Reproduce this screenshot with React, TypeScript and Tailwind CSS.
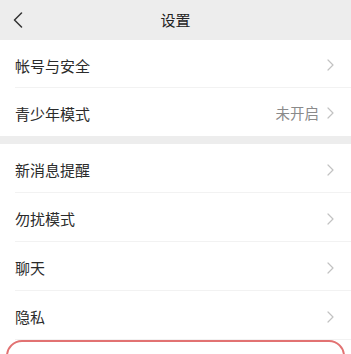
/**
 * Settings screen - 设置
 */

function Chevron() {
  return (
    <svg width="7" height="12" viewBox="0 0 7 12" fill="none" className="shrink-0">
      <path d="M1 1l5 5-5 5" stroke="#c2c2c2" strokeWidth="1.2" strokeLinecap="round" strokeLinejoin="round" />
    </svg>
  );
}

function Row({ label, value, divider = true, tall = false }: { label: string; value?: string; divider?: boolean; tall?: boolean }) {
  return (
    <div
      className={`relative flex items-center justify-between bg-white pl-[15px] pr-[17px] ${tall ? "h-[49px]" : "h-[48px]"}`}
    >
      <span className="pt-[4px] text-[15px] text-[#2b2b2b]">{label}</span>
      <div className="flex items-center gap-[8px] pt-[2px]">
        {value && <span className="text-[14.5px] text-[#8a8a8a]">{value}</span>}
        <Chevron />
      </div>
      {divider && <div className="absolute bottom-0 left-[15px] right-0 h-px bg-[#f2f2f2]" />}
    </div>
  );
}

export default function App() {
  const groupA = [{ label: "帐号与安全" }, { label: "青少年模式", value: "未开启" }];
  const groupB = [{ label: "新消息提醒" }, { label: "勿扰模式" }, { label: "聊天" }, { label: "隐私" }];

  return (
    <div
      className="h-[354px] w-[351px] overflow-hidden bg-white"
      style={{ fontFamily: '"Noto Sans CJK SC", "Noto Sans", sans-serif' }}
    >
      {/* Header */}
      <div className="relative flex h-[40px] items-center justify-center bg-[#ededed]">
        <svg width="10" height="16" viewBox="0 0 10 16" fill="none" className="absolute left-[13px] top-[12px]">
          <path d="M8.5 1L1.5 8l7 7" stroke="#333" strokeWidth="1.5" strokeLinecap="round" strokeLinejoin="round" />
        </svg>
        <span className="text-[15px] text-[#222]">设置</span>
      </div>

      {groupA.map((r, i) => (
        <Row key={r.label} label={r.label} value={r.value} divider={i < groupA.length - 1} />
      ))}

      <div className="h-[8px] bg-[#ededed]" />

      {groupB.map((r) => (
        <Row key={r.label} label={r.label} tall />
      ))}

      {/* Highlighted block */}
      <div className="mx-[6px] h-[60px] rounded-[16px] border-2 border-[#e27272]" />
    </div>
  );
}
